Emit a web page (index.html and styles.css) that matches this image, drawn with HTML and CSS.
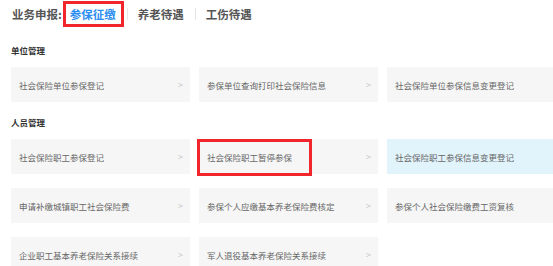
FILE: index.html
```html
<!DOCTYPE html>
<html lang="zh-CN">
<head>
<meta charset="utf-8">
<title>业务申报</title>
<link rel="stylesheet" href="styles.css">
</head>
<body>
<div class="page">
  <div class="header">
    <span class="label">业务申报:</span>
    <nav class="tabs">
      <span class="tab active"><span class="tab-text marked-tab">参保征缴</span></span>
      <span class="tab"><span class="tab-text">养老待遇</span></span>
      <span class="tab"><span class="tab-text">工伤待遇</span></span>
    </nav>
  </div>

  <h3 class="group-title first">单位管理</h3>
  <div class="grid">
    <div class="card"><span>社会保险单位参保登记</span><span class="arrow">&gt;</span></div>
    <div class="card"><span>参保单位查询打印社会保险信息</span><span class="arrow">&gt;</span></div>
    <div class="card"><span>社会保险单位参保信息变更登记</span></div>
  </div>

  <h3 class="group-title">人员管理</h3>
  <div class="grid">
    <div class="card"><span>社会保险职工参保登记</span><span class="arrow">&gt;</span></div>
    <div class="card marked"><span>社会保险职工暂停参保</span><span class="arrow">&gt;</span><span class="mark-box"></span></div>
    <div class="card hover"><span>社会保险职工参保信息变更登记</span></div>
    <div class="card"><span>申请补缴城镇职工社会保险费</span><span class="arrow">&gt;</span></div>
    <div class="card"><span>参保个人应缴基本养老保险费核定</span><span class="arrow">&gt;</span></div>
    <div class="card"><span>参保个人社会保险缴费工资复核</span></div>
    <div class="card"><span>企业职工基本养老保险关系接续</span><span class="arrow">&gt;</span></div>
    <div class="card"><span>军人退役基本养老保险关系接续</span><span class="arrow">&gt;</span></div>
  </div>
</div>
</body>
</html>
```

FILE: styles.css
```css
html, body {
  margin: 0;
  padding: 0;
  overflow: hidden;
  background: #fff;
}

body {
  font-family: "Noto Sans CJK SC", "Noto Sans", sans-serif;
}

.page {
  padding-left: 11px;
  width: 600px;
}

.header {
  display: flex;
  align-items: center;
  height: 28px;
  font-size: 11.5px;
  font-weight: bold;
  color: #555;
}

.label {
  padding-left: 1px;
}

.tabs {
  display: flex;
  align-items: center;
  margin-left: -3px;
}

.tab {
  position: relative;
  padding: 0 11px;
  line-height: 16px;
}

.tab + .tab::before {
  content: "";
  position: absolute;
  left: 0;
  top: 2px;
  height: 12px;
  width: 1px;
  background: #e6e6e6;
}

.tab-text {
  position: relative;
  display: inline-block;
}

.tab.active {
  color: #2b8ef0;
}

.marked-tab::after {
  content: "";
  position: absolute;
  left: -7px;
  right: -8px;
  top: -5px;
  bottom: -5px;
  border: 3px solid #f0262c;
}

.group-title {
  margin: 0;
  font-size: 8.5px;
  line-height: 12px;
  font-weight: bold;
  color: #333;
  margin-top: 14px;
  margin-bottom: 11px;
}

.group-title.first {
  margin-top: 16px;
}

.grid {
  display: grid;
  grid-template-columns: repeat(3, 179px);
  grid-auto-rows: 35px;
  gap: 14px 9px;
}

.card {
  position: relative;
  display: flex;
  align-items: center;
  justify-content: space-between;
  padding: 0 7px 0 8px;
  background: #f6f6f6;
  color: #666;
  font-size: 8.5px;
}

.card.hover {
  background: #e1f3fb;
}

.arrow {
  color: #c8c8c8;
  font-size: 9px;
}

.mark-box {
  position: absolute;
  left: -2px;
  top: 0;
  width: 115px;
  height: 37px;
  box-sizing: border-box;
  border: 3px solid #f0262c;
}
```
